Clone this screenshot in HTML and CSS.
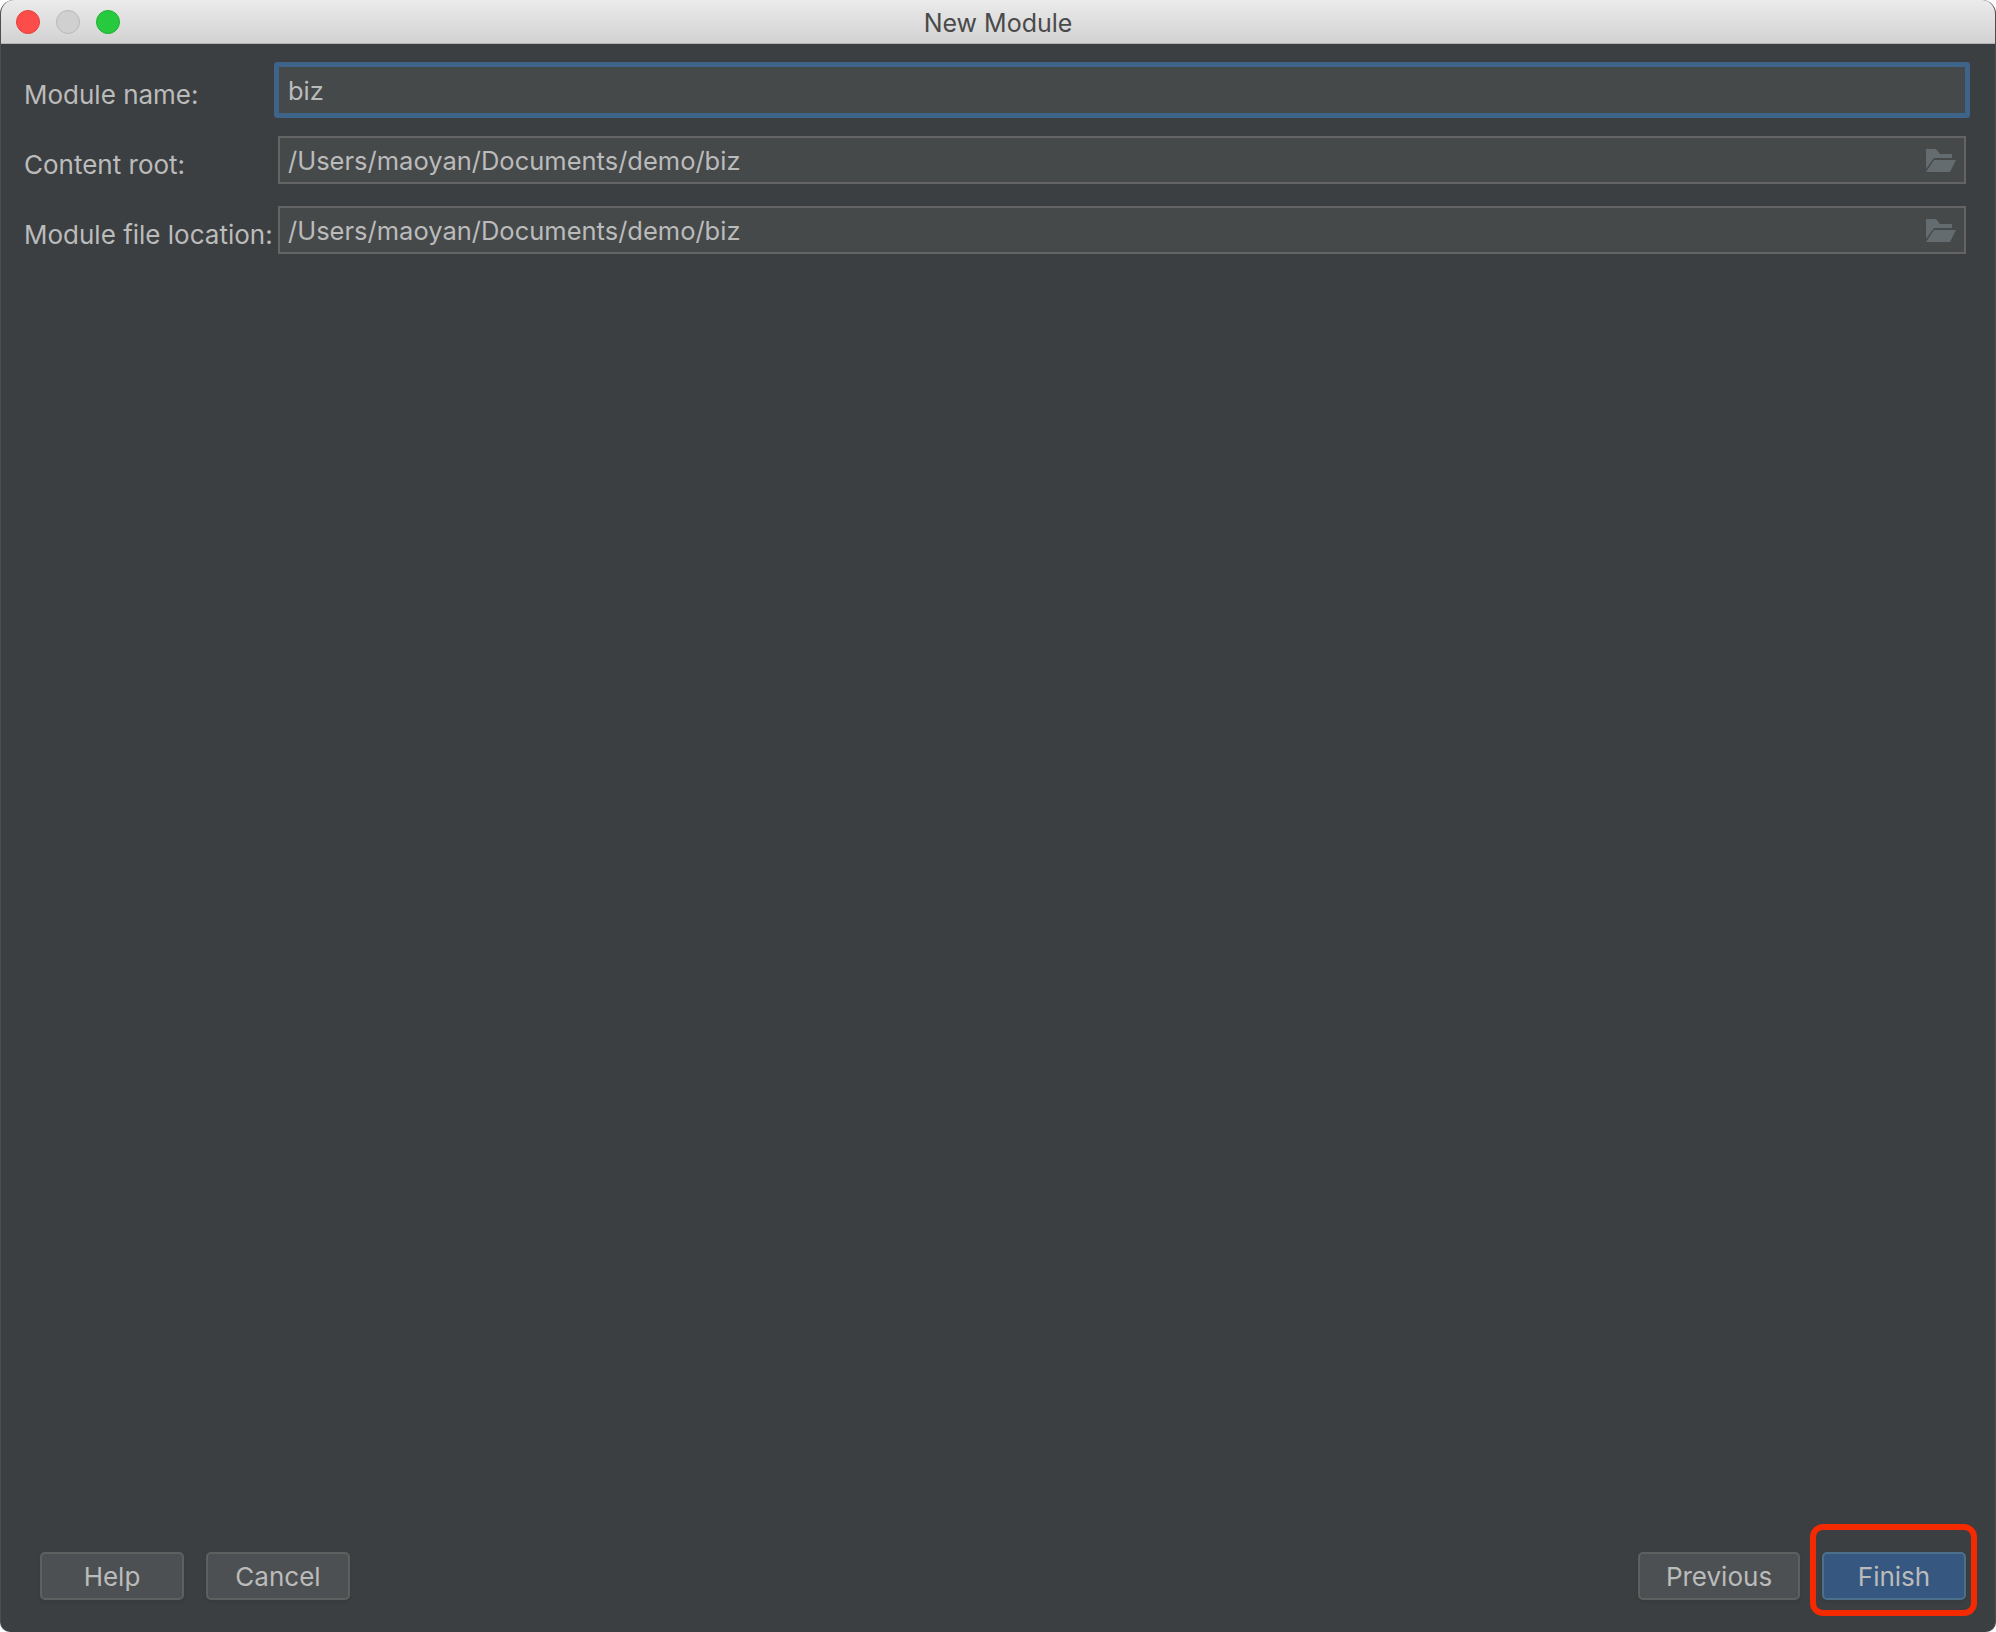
FILE: index.html
```html
<!DOCTYPE html>
<html lang="en">

<head>
    <meta charset="UTF-8">
    <title>New Module</title>
    <link rel="stylesheet" href="styles.css">
</head>

<body>
    <div class="window">
        <div class="titlebar">
            <div class="lights">
                <span class="light red"></span>
                <span class="light grey"></span>
                <span class="light green"></span>
            </div>
            <div class="title">New Module</div>
        </div>

        <div class="form">
            <label class="label">Module name:</label>
            <div class="field focused">biz</div>

            <label class="label">Content root:</label>
            <div class="field">
                /Users/maoyan/Documents/demo/biz
                <svg class="folder" width="30" height="23" viewBox="0 0 30 23">
                    <path d="M0 0H10L14 5H26V9H8L0 20Z" fill="#646c70" />
                    <path d="M8 11H30L24 23H0Z" fill="#646c70" />
                </svg>
            </div>

            <label class="label">Module file location:</label>
            <div class="field">
                /Users/maoyan/Documents/demo/biz
                <svg class="folder" width="30" height="23" viewBox="0 0 30 23">
                    <path d="M0 0H10L14 5H26V9H8L0 20Z" fill="#646c70" />
                    <path d="M8 11H30L24 23H0Z" fill="#646c70" />
                </svg>
            </div>
        </div>

        <div class="footer">
            <div class="btnGroup">
                <div class="btn">Help</div>
                <div class="btn">Cancel</div>
            </div>
            <div class="btnGroup">
                <div class="btn wide">Previous</div>
                <div class="btn primary">Finish</div>
            </div>
        </div>

        <div class="marker"></div>
    </div>
</body>

</html>
```

FILE: styles.css
```css
* {
    margin: 0;
    padding: 0;
    box-sizing: border-box;
}

html,
body {
    width: 1996px;
    height: 1632px;
    background-color: #fff;
    overflow: hidden;
}

body {
    font-family: Inter, "Liberation Sans", sans-serif;
    font-size: 26px;
    color: #bbb;
}

.window {
    position: relative;
    width: 1996px;
    height: 1632px;
    display: flex;
    flex-direction: column;
    background-color: #3c3f41;
    border-left: 1px solid #4c4f51;
    border-right: 1px solid #4c4f51;
    border-radius: 14px 14px 10px 10px;
    overflow: hidden;
}

.titlebar {
    position: relative;
    height: 44px;
    flex: none;
    margin: 0 -1px;
    display: flex;
    align-items: center;
    justify-content: center;
    background: linear-gradient(#ebebeb, #d2d2d2);
    border-bottom: 1px solid #b4b4b4;
}

.lights {
    position: absolute;
    left: 16px;
    top: 10px;
    display: flex;
    gap: 16px;
}

.light {
    width: 24px;
    height: 24px;
    border-radius: 50%;
}

.red {
    background-color: #fc4d4a;
    border: 1px solid #e5403c;
}

.grey {
    background-color: #d0d0d0;
    border: 1px solid #b8b8b8;
}

.green {
    background-color: #27c93f;
    border: 1px solid #1fb032;
}

.title {
    color: #4a4a4a;
    font-size: 25px;
    padding-top: 2px;
}

.form {
    display: grid;
    grid-template-columns: 254px 1fr;
    row-gap: 22px;
    padding: 22px 29px 0 23px;
}

.label {
    padding-top: 5px;
    line-height: 48px;
    height: 48px;
    white-space: nowrap;
}

.field {
    height: 48px;
    padding: 0 8px 0 8px;
    display: flex;
    align-items: center;
    justify-content: space-between;
    font-size: 25.5px;
    background-color: #45494a;
    border: 2px solid #646464;
}

.focused {
    border-width: 1px;
    border-color: #3e6489;
    padding-left: 9px;
    border-radius: 1px;
    box-shadow: 0 0 0 4px #3e6489;
}

.folder {
    margin-top: 1px;
}

.footer {
    margin-top: auto;
    display: flex;
    justify-content: space-between;
    padding: 0 29px 32px 39px;
}

.btnGroup {
    display: flex;
    gap: 22px;
}

.btn {
    width: 144px;
    height: 48px;
    display: flex;
    align-items: center;
    justify-content: center;
    background-color: #4c5052;
    border: 2px solid #5e6060;
    border-radius: 5px;
    box-shadow: 0 2px 3px #383a3c;
}

.wide {
    width: 162px;
}

.primary {
    background-color: #365880;
    border-color: #4c708c;
}

.marker {
    position: absolute;
    left: 1809px;
    top: 1524px;
    width: 167px;
    height: 92px;
    border: 6px solid #f52a00;
    border-radius: 13px;
}
```
